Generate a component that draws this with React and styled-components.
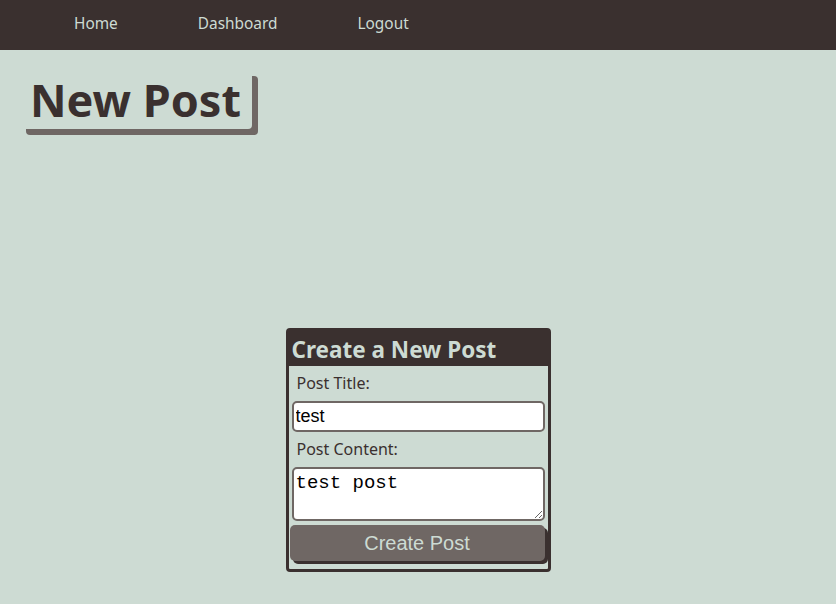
import styled, { createGlobalStyle } from "styled-components";

const GlobalStyle = createGlobalStyle`
  body {
    margin: 0;
    background-color: #cddbd3;
    font-family: "Noto Sans", sans-serif;
  }
`;

const Nav = styled.nav`
  height: 50px;
  background-color: #3a302f;
  display: flex;
  align-items: center;
  padding: 0 34px 4px;
  box-sizing: border-box;
`;

const NavLink = styled.a`
  color: #cddbd3;
  font-size: 15.4px;
  text-decoration: none;
  margin: 0 40px;
  cursor: pointer;
`;

const Main = styled.main`
  padding: 20px 20px 0;
`;

const Title = styled.h1`
  display: inline-block;
  margin: 0;
  padding: 0 11px 0 10px;
  height: 59px;
  line-height: 59px;
  font-size: 45px;
  font-weight: 700;
  color: #3a302f;
  border-radius: 4px;
  box-shadow: 6px 6px 0 #6f6764;
`;

const Card = styled.form`
  width: 265px;
  box-sizing: border-box;
  margin: 199px auto 0;
  border: 3px solid #3a302f;
  border-radius: 4px;
  display: flex;
  flex-direction: column;
  padding-bottom: 8px;
`;

const CardHeader = styled.h2`
  margin: 0;
  padding: 3px 3px 0;
  height: 35px;
  box-sizing: border-box;
  background-color: #3a302f;
  color: #cddbd3;
  font-size: 22.5px;
  font-weight: 700;
  line-height: 32px;
`;

const Label = styled.label`
  display: block;
  padding: 6px 8px 0;
  height: 35px;
  box-sizing: border-box;
  font-size: 16px;
  color: #3a302f;
`;

const Field = styled.input`
  margin: 0 3px;
  height: 31px;
  box-sizing: border-box;
  border: 2px solid #6f6764;
  border-radius: 5px;
  background: #fff;
  padding: 0 2px;
  font-family: "Liberation Sans", Arial, sans-serif;
  font-size: 18px;
  color: #000;
  outline: none;
`;

const Area = styled.textarea`
  margin: 0 3px;
  height: 54px;
  box-sizing: border-box;
  border: 2px solid #6f6764;
  border-radius: 5px;
  background: #fff;
  padding: 3px 2px;
  font-family: "Liberation Mono", "Courier New", monospace;
  font-size: 19px;
  color: #000;
  outline: none;
`;

const Button = styled.button`
  margin: 4px 3px 0 1px;
  height: 36px;
  border: none;
  border-radius: 5px;
  background-color: #6f6764;
  color: #cddbd3;
  font-family: "Liberation Sans", Arial, sans-serif;
  font-size: 20px;
  box-shadow: 3px 3px 0 #3a302f;
  cursor: pointer;
`;

export default function App() {
  return (
    <>
      <GlobalStyle />
      <Nav>
        <NavLink>Home</NavLink>
        <NavLink>Dashboard</NavLink>
        <NavLink>Logout</NavLink>
      </Nav>
      <Main>
        <Title>New Post</Title>
        <Card onSubmit={(e) => e.preventDefault()}>
          <CardHeader>Create a New Post</CardHeader>
          <Label htmlFor="title">Post Title:</Label>
          <Field id="title" defaultValue="test" />
          <Label htmlFor="content">Post Content:</Label>
          <Area id="content" defaultValue="test post" />
          <Button type="submit">Create Post</Button>
        </Card>
      </Main>
    </>
  );
}
